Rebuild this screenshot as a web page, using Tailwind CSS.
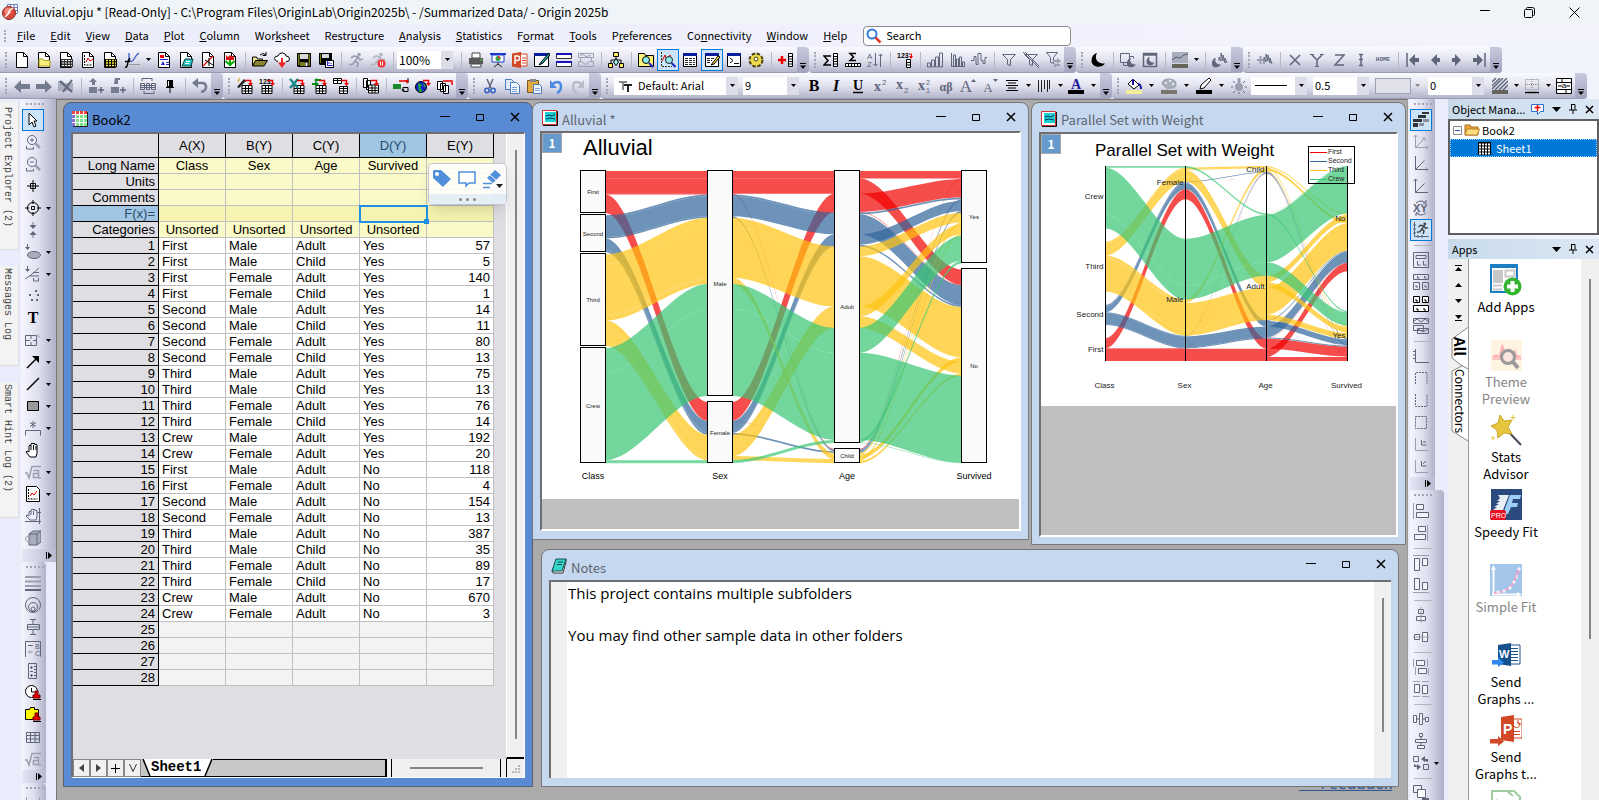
<!DOCTYPE html>
<html lang="en">
<head>
  <meta charset="UTF-8" />
  <meta name="viewport" content="width=device-width, initial-scale=1" />
  <title>Alluvial.opju - Origin 2025b</title>
  <script src="https://cdn.jsdelivr.net/npm/@tailwindcss/browser@4"></script>
</head>
<body class="h-screen overflow-hidden flex flex-col bg-[#f0f3fc] text-black text-[11px] font-['Noto_Sans_CJK_SC','Noto_Sans',sans-serif]">

  <!-- Title bar -->
  <header class="h-6 shrink-0 flex items-center bg-[#eff4f9] pl-[2px]">
    <svg class="w-4 h-4 shrink-0" viewBox="0 0 16 16"><path d="M5.500 .5h10v9h-10zM8.500.5v9M12 .5v9M5.500 3.500h10M5.500 6.500h10" fill="#fff" stroke="#6c7fc0"/><circle cx="7" cy="9" r="6.500" fill="#d94a3c" stroke="#8d2a20"/><circle cx="6" cy="7" r="3.500" fill="#f08a7c"/><path d="M3 13l3-3 2-4 3-2" fill="none" stroke="#fff" stroke-width="1.500"/></svg>
    <h1 class="ml-[6px] text-[12px] whitespace-nowrap">Alluvial.opju * [Read-Only] - C:\Program Files\OriginLab\Origin2025b\ - /Summarized Data/ - Origin 2025b</h1>
    <div class="ml-auto flex pr-[2px]">
      <button aria-label="Minimize" class="w-[45px] h-6 flex items-center justify-center"><svg class="w-[10px] h-[10px]" viewBox="0 0 10 10"><path d="M0 3.500h10" stroke="#000"/></svg></button>
      <button aria-label="Restore" class="w-[45px] h-6 flex items-center justify-center"><svg class="w-[11px] h-[11px]" viewBox="0 0 11 11" fill="none" stroke="#000"><rect x=".5" y="2.500" width="8" height="8" rx="1"/><path d="M2.500 2v-.5a1 1 0 0 1 1-1h5a2 2 0 0 1 2 2v5a1 1 0 0 1-1 1h-.5"/></svg></button>
      <button aria-label="Close" class="w-[45px] h-6 flex items-center justify-center"><svg class="w-[11px] h-[11px]" viewBox="0 0 11 11"><path d="M.5.5l10 10M10.500.5l-10 10" stroke="#000"/></svg></button>
    </div>
  </header>

  <!-- Menu -->
  <nav class="h-[23px] shrink-0 flex items-center bg-linear-to-r from-[#ecedfb] to-[#f3f4fd] pl-1">
    <span class="h-3 w-[2px] border-l-2 border-dotted border-[#a8a8b8] mr-[11px]"></span>
    <div id="menu" class="flex gap-[15px] whitespace-nowrap">
      <a href="#"><u>F</u>ile</a>
      <a href="#"><u>E</u>dit</a>
      <a href="#"><u>V</u>iew</a>
      <a href="#"><u>D</u>ata</a>
      <a href="#"><u>P</u>lot</a>
      <a href="#"><u>C</u>olumn</a>
      <a href="#">Wor<u>k</u>sheet</a>
      <a href="#">Restr<u>u</u>cture</a>
      <a href="#"><u>A</u>nalysis</a>
      <a href="#"><u>S</u>tatistics</a>
      <a href="#">F<u>o</u>rmat</a>
      <a href="#"><u>T</u>ools</a>
      <a href="#">P<u>r</u>eferences</a>
      <a href="#">Co<u>n</u>nectivity</a>
      <a href="#"><u>W</u>indow</a>
      <a href="#"><u>H</u>elp</a>
    </div>
    <label class="ml-4 w-[208px] h-5 flex items-center rounded border border-[#8c8c8c] bg-white pl-[2px]">
      <svg class="w-4 h-4 shrink-0" viewBox="0 0 16 16" fill="none"><circle cx="6" cy="6" r="4.500" stroke="#2f7fe0" stroke-width="2"/><path d="M9.500 9.500l5 5" stroke="#e03c31" stroke-width="2.500"/></svg>
      <input type="text" aria-label="Search" placeholder="Search" class="ml-1 w-full outline-none bg-transparent placeholder:text-black">
    </label>
  </nav>

  <!-- Toolbar row 1 -->
  <div class="h-[26px] shrink-0 flex">
    <div class="flex items-center h-[26px] bg-linear-to-b from-[#fafbff] via-[#e2e3ef] to-[#b4b4cb] border-b border-[#9a9ab2] rounded-r-sm">
      <span data-tools="grip new folder sheet graph matrix func&gt; report notes layout image | open cloud save savet | run runx |" class="contents"></span>
      <label class="flex w-14 h-[18px] bg-white mr-1 text-[12px]"><select aria-label="Zoom" class="appearance-none flex-1 min-w-0 pl-[2px] outline-none"><option>100%</option></select><span class="w-3 bg-[#dcdde9] flex items-center justify-center"><svg class="w-[5px] h-[3px]" viewBox="0 0 5 3"><path d="M0 0h5L2.500 3z"/></svg></span></label>
      <span data-tools="| print slides ppt edit rows rowsg | tree | find zoomg* list noted* cmd gear | addcol cap" class="contents"></span>
    </div>
    <div class="flex items-center h-[26px] bg-linear-to-b from-[#fafbff] via-[#e2e3ef] to-[#b4b4cb] border-b border-[#9a9ab2] rounded-sm">
      <span data-tools="grip sumcol sumrow sort | num | bar1 bar2 bar3 | filt filtx filty cap" class="contents"></span>
    </div>
    <div class="flex items-center h-[26px] bg-linear-to-b from-[#fafbff] via-[#e2e3ef] to-[#b4b4cb] border-b border-[#9a9ab2] rounded-sm">
      <span data-tools="grip moon | moonw moonc | mask&gt; | moonm cap" class="contents"></span>
    </div>
    <div class="flex items-center h-[26px] bg-linear-to-b from-[#fafbff] via-[#e2e3ef] to-[#b4b4cb] border-b border-[#9a9ab2] rounded-sm">
      <span data-tools="grip plusm | axx axy axz axi home | first prev next last cap" class="contents"></span>
    </div>
  </div>

  <!-- Toolbar row 2 -->
  <div class="h-[26px] shrink-0 flex">
    <div class="flex items-center h-[26px] bg-linear-to-b from-[#fafbff] via-[#e2e3ef] to-[#b4b4cb] border-b border-[#9a9ab2] rounded-r-sm">
      <span data-tools="grip back fwd upx | addu addd | swap pin | undog cap" class="contents"></span>
    </div>
    <div class="flex items-center h-[26px] bg-linear-to-b from-[#fafbff] via-[#e2e3ef] to-[#b4b4cb] border-b border-[#9a9ab2] rounded-sm">
      <span data-tools="grip impwiz imp123 | impxl impref impdup | impmulti | conn globe disc cap" class="contents"></span>
    </div>
    <div class="flex items-center h-[26px] bg-linear-to-b from-[#fafbff] via-[#e2e3ef] to-[#b4b4cb] border-b border-[#9a9ab2] rounded-sm">
      <span data-tools="grip cut copy paste undo redo cap" class="contents"></span>
    </div>
    <div class="flex items-center h-[26px] bg-linear-to-b from-[#fafbff] via-[#e2e3ef] to-[#b4b4cb] border-b border-[#9a9ab2] rounded-sm">
      <span data-tools="grip" class="contents"></span>
      <label class="flex w-[124px] h-[18px] bg-white mr-[5px] ml-[2px] items-center"><svg class="w-4 h-4 mx-1 shrink-0" viewBox="0 0 16 16"><path d="M1 3h8v2H6v7H4V5H1z" fill="#888"/><path d="M6 6h8v2h-3v6H9V8H6z" fill="#222"/></svg><select aria-label="Font" class="appearance-none flex-1 min-w-0 outline-none"><option>Default: Arial</option></select><span class="w-3 h-full bg-[#dcdde9] flex items-center justify-center"><svg class="w-[5px] h-[3px]" viewBox="0 0 5 3"><path d="M0 0h5L2.500 3z"/></svg></span></label>
      <label class="flex w-14 h-[18px] bg-white mr-1"><select aria-label="Font size" class="appearance-none flex-1 min-w-0 pl-[2px] outline-none"><option>9</option></select><span class="w-3 bg-[#dcdde9] flex items-center justify-center"><svg class="w-[5px] h-[3px]" viewBox="0 0 5 3"><path d="M0 0h5L2.500 3z"/></svg></span></label>
      <span data-tools="bold italic under sup sub supsub greek abig asmall align&gt; barcode&gt; fontc&gt;&gt; cap" class="contents"></span>
    </div>
    <div class="flex items-center h-[26px] bg-linear-to-b from-[#fafbff] via-[#e2e3ef] to-[#b4b4cb] border-b border-[#9a9ab2] rounded-sm">
      <span data-tools="grip fill&gt;&gt; palette&gt;&gt; pen&gt;&gt; lamp" class="contents"></span>
      <label class="flex w-14 h-[18px] bg-white mr-[3px] ml-px items-center"><span class="w-8 ml-1 border-t border-black"></span><select aria-label="Line style" class="appearance-none flex-1 min-w-0 outline-none"><option></option></select><span class="w-3 h-full bg-[#dcdde9] flex items-center justify-center"><svg class="w-[5px] h-[3px]" viewBox="0 0 5 3"><path d="M0 0h5L2.500 3z"/></svg></span></label>
      <label class="flex w-14 h-[18px] bg-white mx-[3px]"><select aria-label="Line width" class="appearance-none flex-1 min-w-0 pl-[2px] outline-none"><option>0.5</option></select><span class="w-3 bg-[#dcdde9] flex items-center justify-center"><svg class="w-[5px] h-[3px]" viewBox="0 0 5 3"><path d="M0 0h5L2.500 3z"/></svg></span></label>
      <label class="flex w-[50px] h-4 ml-[3px] mr-[3px] items-center"><select aria-label="Pattern" class="appearance-none w-9 h-4 border border-[#a0a0ac] bg-[#dfe0ea]"><option></option></select><svg class="w-[5px] h-[3px] ml-1" viewBox="0 0 5 3"><path d="M0 0h5L2.500 3z" fill="#888"/></svg></label>
      <label class="flex w-14 h-[18px] bg-white mr-[5px]"><select aria-label="Transparency" class="appearance-none flex-1 min-w-0 pl-[2px] outline-none"><option>0</option></select><span class="w-3 bg-[#dcdde9] flex items-center justify-center"><svg class="w-[5px] h-[3px]" viewBox="0 0 5 3"><path d="M0 0h5L2.500 3z"/></svg></span></label>
      <span data-tools="hatch&gt; border&gt; merge cap" class="contents"></span>
    </div>
  </div>

  <div class="flex-1 min-h-0 flex">
    <!-- Docked tabs -->
    <div class="w-[19px] shrink-0 bg-[#ebecfb] flex flex-col gap-4 pt-[3px] font-['Liberation_Mono',monospace] text-[10px] text-[#444]">
      <button class="h-[148px] bg-[#f3f3f3] border-r border-b border-[#ddd] [writing-mode:vertical-rl] text-left pt-[5px] pr-1 leading-[14px]">Project Explorer (2)</button>
      <button class="h-[100px] bg-[#f3f3f3] border-r border-b border-[#ddd] [writing-mode:vertical-rl] text-left pt-[2px] pr-1 leading-[14px]">Messages Log</button>
      <button class="h-[136px] bg-[#f3f3f3] border-r border-b border-[#ddd] [writing-mode:vertical-rl] text-left pt-[2px] pr-1 leading-[14px]">Smart Hint Log (2)</button>
    </div>

    <!-- Left toolbars -->
    <div class="w-[38px] shrink-0 bg-[#ebecfb] pl-[2px] flex flex-col items-start overflow-hidden border-r border-[#777]">
      <div class="w-[35px] shrink-0 pl-px rounded-b-sm bg-linear-to-r from-[#f5f6fe] via-[#dfe0ee] to-[#b0b0c8]">
        <div data-tools="grip pointer* zoomin zoomout cross target&gt; pair region&gt; fit&gt; dots text block&gt; arrow&gt; line&gt; rect&gt; brack&gt; hand sqrt&gt; minig&gt; handg cube cap" data-dir="v"></div>
      </div>
      <div class="w-[25px] shrink-0 pl-px rounded-sm bg-linear-to-r from-[#f5f6fe] via-[#dfe0ee] to-[#b0b0c8]">
        <div data-tools="grip lines rings box legend ruler clock yfold tableg sqrt cap" data-dir="v"></div>
      </div>
      <div class="w-[25px] shrink-0 pl-px rounded-sm bg-linear-to-r from-[#f5f6fe] via-[#dfe0ee] to-[#b0b0c8]">
        <div data-tools="grip frame1" data-dir="v"></div>
      </div>
    </div>

    <!-- Workspace -->
    <main class="flex-1 min-w-0 relative overflow-hidden bg-[#ababab] border-t border-[#777]">
      <a href="#" class="absolute left-[1242px] top-[672px] text-[16px] leading-5 text-[#2f5597] underline">&gt; &gt;Feedback</a>

      <!-- Book2 -->
      <section class="absolute left-[6px] top-[2px] w-[470px] h-[685px] flex flex-col rounded-t-lg border border-[#5a5f6b] bg-[#588bd4] px-[7px] pb-2">
        <div class="h-[29px] shrink-0 flex items-center">
          <svg class="w-4 h-4 ml-px mt-[2px]" viewBox="0 0 16 16" shape-rendering="crispEdges"><path d="M0 0h15v15H0z" fill="#fff"/><path d="M0 0h15v3H0z" fill="#e8453c"/><path d="M0 3h3v12H0z" fill="#8a6fd0"/><path d="M3 3h12v12H3z" fill="#7fe08a"/><path d="M3.500 0v15M7.500 0v15M11.500 0v15M0 3.500h15M0 7.500h15M0 11.500h15" stroke="#fff"/><path d="M15.500 1v14.500H1" stroke="#222" fill="none"/></svg>
          <h2 class="ml-1 text-[13px] leading-4 pt-[5px]">Book2</h2>
          <div data-controls class="ml-auto -mr-[7px] flex self-start pt-1"></div>
        </div>
        <div class="flex-1 min-h-0 flex flex-col bg-[#dfdee3] border-t-2 border-l-2 border-t-[#6f6f6f] border-l-[#6f6f6f] border-r border-b border-r-white border-b-white">
          <div class="flex-1 min-h-0 flex">
            <div class="flex-1 min-w-0 relative font-['Liberation_Sans',Arial,sans-serif] text-[13px]">
              <table class="table-fixed w-[421px] border-separate border-spacing-0 leading-[15px]">
                <thead id="bookHead"></thead>
                <tbody id="bookBody"></tbody>
              </table>
              <!-- Mini toolbar -->
              <div class="absolute left-[355px] top-[29px] w-[79px] h-[42px] rounded border border-[#c4c8cc] bg-white/85 shadow-lg flex flex-col z-10">
                <div class="flex-1 flex items-center justify-around">
                  <button aria-label="Label"><svg class="w-5 h-5" viewBox="0 0 20 20"><path d="M1 2l1-1h7l10 9-8 8-10-9z" fill="#4f8fdc"/><circle cx="5" cy="5" r="2" fill="#fff"/></svg></button>
                  <button aria-label="Comment"><svg class="w-5 h-5" viewBox="0 0 20 20"><path d="M2 3h16v11h-6l-3 3v-3H2z" fill="#fff" stroke="#4f8fdc" stroke-width="1.500"/></svg></button>
                  <button aria-label="Highlight"><svg class="w-5 h-5" viewBox="0 0 20 20"><path d="M12 1l6 5-8 8-6-5z" fill="#4f8fdc"/><path d="M7 6l6 5" stroke="#fff"/><path d="M0 14.500h9M0 18.500h7" stroke="#4f8fdc" stroke-width="1.500"/><path d="M13 15h7l-3.500 4z" fill="#222"/></svg></button>
                </div>
                <div class="h-[10px] bg-[#dfe8f4]/80 flex items-center justify-center gap-1"><i class="w-[3px] h-[3px] rounded-full bg-[#888]"></i><i class="w-[3px] h-[3px] rounded-full bg-[#888]"></i><i class="w-[3px] h-[3px] rounded-full bg-[#888]"></i></div>
              </div>
            </div>
            <div class="w-[18px] bg-[#f0f0f0] border-l border-white border-b-2 border-b-black flex justify-center pt-4 pb-[18px]"><span class="w-[2px] bg-[#858585]"></span></div>
          </div>
          <div class="h-[18px] flex bg-[#f0f0f0]">
            <button aria-label="Previous sheet" class="w-[17px] border border-[#888] flex items-center justify-center"><svg class="w-[5px] h-2" viewBox="0 0 5 8"><path d="M5 0v8L0 4z" fill="#444"/></svg></button>
            <button aria-label="Next sheet" class="w-[17px] border border-[#888] flex items-center justify-center"><svg class="w-[5px] h-2" viewBox="0 0 5 8"><path d="M0 0v8l5-4z" fill="#444"/></svg></button>
            <button aria-label="Add sheet" class="w-[17px] border border-[#888] flex items-center justify-center"><svg class="w-[9px] h-[9px]" viewBox="0 0 9 9"><path d="M4.500 0v9M0 4.500h9" stroke="#000"/></svg></button>
            <button aria-label="Sheet list" class="w-[17px] border border-[#888] flex items-center justify-center"><svg class="w-[8px] h-[8px]" viewBox="0 0 8 8"><path d="M.5 0L4 7.500 7.500 0" fill="none" stroke="#333"/></svg></button>
            <div class="w-[246px] flex bg-[#c8c8c8] border-r-2 border-b border-black">
              <svg class="w-[10px] h-[17px]" viewBox="0 0 10 17"><path d="M3 0l6 17h1V0z" fill="#fff"/><path d="M2 0l7 17" stroke="#000" stroke-width="1.500"/></svg>
              <button class="bg-white font-['Liberation_Mono',monospace] font-bold text-[14px] leading-[17px]">Sheet1</button>
              <svg class="w-[12px] h-[17px]" viewBox="0 0 12 17"><path d="M0 0h11L4 17H0z" fill="#fff"/><path d="M11 0L4 17" stroke="#000" stroke-width="1.500"/></svg>
              <span class="flex-1 border-t border-black"></span>
            </div>
            <div class="ml-1 flex-1 border-x border-black flex items-center justify-center"><span class="w-[73px] h-[2px] bg-[#858585]"></span></div>
            <div class="ml-[5px] w-[18px] border-l border-black flex items-end justify-end p-1"><svg class="w-2 h-2" viewBox="0 0 8 8" fill="#b8b8b8"><path d="M6 0h2v2H6zM3 3h2v2H3zM6 3h2v2H6zM0 6h2v2H0zM3 6h2v2H3zM6 6h2v2H6z"/></svg></div>
          </div>
        </div>
      </section>

      <!-- Alluvial -->
      <section class="absolute left-[475px] top-[2px] w-[497px] h-[438px] flex flex-col rounded-t-lg border border-[#777] bg-[#c6d8f0] px-[7px] pb-2">
        <div class="h-[28px] shrink-0 flex items-center">
          <svg class="w-4 h-4 ml-[2px] mt-[2px]" viewBox="0 0 16 16"><path d="M.5.5h14v14H.5z" fill="#fff" stroke="#c33"/><path d="M3 2h11v10H3z" fill="#1fd0d0"/><path d="M4 6l3-1 3 1 3-2M4 9l4-1 5 1" stroke="#036" fill="none"/><path d="M15.500 1v14.500H1" stroke="#111" fill="none"/></svg>
          <h2 class="ml-1 text-[13px] leading-4 pt-[5px] text-[#5c6470]">Alluvial *</h2>
          <div data-controls class="ml-auto -mr-[7px] flex self-start pt-1"></div>
        </div>
        <div class="flex-1 min-h-0 relative bg-[#bfbfbf] border-t-2 border-l-2 border-t-[#6f6f6f] border-l-[#6f6f6f] border-r-2 border-b-2 border-r-white border-b-white">
          <button class="absolute left-0 top-0 w-5 h-5 bg-[#6699cc] border border-[#aaa] text-white font-bold text-[12px] leading-4">1</button>
          <svg id="alluvial" class="w-full h-[366px] bg-white font-['Liberation_Sans',Arial,sans-serif]" viewBox="0 0 477 366" preserveAspectRatio="xMinYMin meet"></svg>
        </div>
      </section>

      <!-- Parallel Set with Weight -->
      <section class="absolute left-[974px] top-[2px] w-[375px] h-[443px] flex flex-col rounded-t-lg border border-[#777] bg-[#c6d8f0] px-[7px] pb-[7px]">
        <div class="h-[29px] shrink-0 flex items-center">
          <svg class="w-4 h-4 ml-[2px] mt-[2px]" viewBox="0 0 16 16"><path d="M.5.5h14v14H.5z" fill="#fff" stroke="#c33"/><path d="M3 2h11v10H3z" fill="#1fd0d0"/><path d="M4 6l3-1 3 1 3-2M4 9l4-1 5 1" stroke="#036" fill="none"/><path d="M15.500 1v14.500H1" stroke="#111" fill="none"/></svg>
          <h2 class="ml-1 text-[13px] leading-4 pt-[5px] text-[#5c6470]">Parallel Set with Weight</h2>
          <div data-controls class="ml-auto -mr-[7px] flex self-start pt-1"></div>
        </div>
        <div class="flex-1 min-h-0 relative bg-[#bfbfbf] border-t-2 border-l-2 border-t-[#6f6f6f] border-l-[#6f6f6f] border-r-2 border-b-2 border-r-white border-b-white">
          <button class="absolute left-0 top-0 w-5 h-5 bg-[#6699cc] border border-[#aaa] text-white font-bold text-[12px] leading-4">1</button>
          <svg id="parallel" class="w-full h-[272px] bg-white font-['Liberation_Sans',Arial,sans-serif]" viewBox="0 0 355 272" preserveAspectRatio="xMinYMin meet"></svg>
        </div>
      </section>

      <!-- Notes -->
      <section class="absolute left-[484px] top-[449px] w-[858px] h-[238px] flex flex-col rounded-t-lg border border-[#777] bg-[#c6d8f0] px-[7px] pb-2">
        <div class="h-[30px] shrink-0 flex items-center">
          <svg class="w-4 h-4 ml-[2px] mt-[2px]" viewBox="0 0 16 16"><path d="M15 1v3l-3 11H2l-1-2 1-3z" fill="#fff" stroke="#333"/><path d="M5 1h10l-4 12H1z" fill="#35d6cc" stroke="#12504c"/><path d="M7 4h5M6 6.500h5" stroke="#12504c"/></svg>
          <h2 class="ml-1 text-[13px] leading-4 pt-[5px] text-[#5c6470]">Notes</h2>
          <div data-controls class="ml-auto -mr-[7px] flex self-start pt-1"></div>
        </div>
        <div class="flex-1 min-h-0 flex bg-white border-t-2 border-l-2 border-t-[#6f6f6f] border-l-[#6f6f6f]">
          <span class="w-4 bg-[#f0f0f0]"></span>
          <textarea aria-label="Notes" class="flex-1 resize-none outline-none overflow-hidden pl-px pt-px text-[15px] leading-[21px] font-['Open_Sans','Noto_Sans',sans-serif]">This project contains multiple subfolders

You may find other sample data in other folders</textarea>
          <div class="w-[17px] bg-[#f0f0f0] flex justify-center pt-4 pb-[46px]"><span class="w-[2px] bg-[#858585]"></span></div>
        </div>
      </section>
    </main>

    <!-- Right toolbars -->
    <div class="w-[41px] shrink-0 bg-[#ebecfb] pl-[2px] flex flex-col items-start overflow-hidden border-l border-[#999]">
      <div class="w-[25px] shrink-0 rounded-b-sm bg-linear-to-r from-[#f5f6fe] via-[#dfe0ee] to-[#b0b0c8]">
        <div data-tools="grip stairs* ax1 ax2 ax3 xy runax* | lay1 lay2 lay3 lay4 | fr1 fr2 fr3 fr4 fr5 fr6 cap" data-dir="v"></div>
      </div>
      <div class="w-[34px] shrink-0 rounded-t-sm bg-linear-to-r from-[#f5f6fe] via-[#dfe0ee] to-[#b0b0c8]">
        <div data-tools="grip al1 al2 | al3 al4 | al5 al6 | al7 al8 | al9 al10 rot&gt; | front" data-dir="v"></div>
      </div>
    </div>

    <!-- Docked panels -->
    <aside class="w-[151px] shrink-0 flex flex-col bg-[#f0f3fc]">
      <div class="h-5 shrink-0 flex items-center pl-1 bg-linear-to-r from-[#c8daea] to-[#dbe8f4]">
        <h2 class="whitespace-nowrap">Object Mana...</h2>
        <div class="ml-auto flex items-center gap-[8px] pr-[5px]">
          <button aria-label="Add"><svg class="w-[13px] h-[13px]" viewBox="0 0 13 13"><path d="M.5 1.500h12v7h-3l-3 3v-3h-6z" fill="#fff" stroke="#2f6fd6"/><path d="M6.500 2v6M3.500 4.500h6" stroke="#f00" stroke-width="1.500"/></svg></button>
          <button aria-label="Menu"><svg class="w-[9px] h-[5px]" viewBox="0 0 9 5"><path d="M0 0h9L4.500 5z"/></svg></button>
          <button aria-label="Pin"><svg class="w-2 h-[10px]" viewBox="0 0 8 10"><path d="M2 .5h4v5M2.500 0v6M0 6h8M4 6v4" stroke="#000" fill="none"/></svg></button>
          <button aria-label="Close"><svg class="w-[9px] h-[9px]" viewBox="0 0 9 9"><path d="M1 1l7 7M8 1L1 8" stroke="#000" stroke-width="1.500"/></svg></button>
        </div>
      </div>
      <ul class="h-[116px] shrink-0 border-2 border-[#5f5f63] bg-white leading-[18px]">
        <li class="h-[18px] flex items-center pl-[3px] gap-[2px]"><svg class="w-[9px] h-[9px]" viewBox="0 0 9 9"><path d="M.5.5h8v8h-8z" fill="#fff" stroke="#888"/><path d="M2 4.500h5" stroke="#2a4fae"/></svg><svg class="w-4 h-4" viewBox="0 0 16 16"><path d="M1 3h5l1 2h7v8H1z" fill="#e8a93a" stroke="#a8701c"/><path d="M3 7h12.500l-2.500 6H1z" fill="#ffdc7e" stroke="#b8802a"/></svg>Book2</li>
        <li class="h-[18px] flex items-center pl-[28px] gap-[5px] bg-[#0078d7] text-white outline-1 -outline-offset-1 outline-dotted outline-[#9cd0ff]"><svg class="w-[13px] h-[13px]" viewBox="0 0 13 13"><path d="M0 0h13v13H0z"/><path d="M1 2.500h11M1 5.500h11M1 8.500h11M1 11.500h11" stroke="#fff" stroke-width="2"/><path d="M3.500 1v12M6.500 1v12M9.500 1v12" stroke="#000"/></svg>Sheet1</li>
      </ul>
      <div class="h-5 shrink-0 mt-1 flex items-center pl-1 bg-linear-to-r from-[#c8daea] to-[#dbe8f4]">
        <h2>Apps</h2>
        <div class="ml-auto flex items-center gap-[8px] pr-[5px]">
          <button aria-label="Menu"><svg class="w-[9px] h-[5px]" viewBox="0 0 9 5"><path d="M0 0h9L4.500 5z"/></svg></button>
          <button aria-label="Pin"><svg class="w-2 h-[10px]" viewBox="0 0 8 10"><path d="M2 .5h4v5M2.500 0v6M0 6h8M4 6v4" stroke="#000" fill="none"/></svg></button>
          <button aria-label="Close"><svg class="w-[9px] h-[9px]" viewBox="0 0 9 9"><path d="M1 1l7 7M8 1L1 8" stroke="#000" stroke-width="1.500"/></svg></button>
        </div>
      </div>
      <div class="flex-1 min-h-0 flex bg-[#f0f0f0]">
        <div class="w-5 shrink-0 flex flex-col items-center">
          <div class="h-[68px] flex flex-col items-center justify-between pt-[6px] pb-[6px]">
            <svg class="w-[7px] h-[7px]" viewBox="0 0 7 7"><path d="M0 .5h7" stroke="#000"/><path d="M0 6h7L3.500 2z"/></svg>
            <svg class="w-[7px] h-1" viewBox="0 0 7 4"><path d="M0 4h7L3.500 0z"/></svg>
            <svg class="w-[7px] h-1" viewBox="0 0 7 4"><path d="M0 0h7L3.500 4z"/></svg>
            <svg class="w-[7px] h-[7px]" viewBox="0 0 7 7"><path d="M0 6.500h7" stroke="#000"/><path d="M0 1h7L3.500 5z"/></svg>
          </div>
          <div class="relative w-5 h-[120px]">
            <svg class="absolute inset-0 w-5 h-[120px]" viewBox="0 0 20 120"><path d="M20.500 0L4 12v19l10 8-10 5v60l16 10" fill="#fff" stroke="#888"/><path d="M13 38l7 4" stroke="#888"/></svg>
            <button class="absolute left-1 top-[10px] font-bold text-[15px] leading-4 [writing-mode:vertical-rl]">All</button>
            <button class="absolute left-1 top-[42px] text-[12px] leading-4 [writing-mode:vertical-rl]">Connectors</button>
          </div>
        </div>
        <div class="flex-1 border-l border-[#999] bg-white pt-[5px] overflow-hidden text-[13px] leading-[17px] text-center">
          <button class="w-[74px] h-[75px] flex flex-col items-center gap-[2px]"><svg class="w-8 h-8 shrink-0" viewBox="0 0 32 32"><path d="M1 1h26v27H1z" fill="#fff" stroke="#1a7fc1" stroke-width="2"/><path d="M0 0h28v4H0z" fill="#1a7fc1"/><path d="M3 6h10v13H3z" fill="#c8c8c8"/><path d="M15.500 6.500h9v6h-9zM3 21.500h9M3 25.500h9" fill="none" stroke="#c8c8c8" stroke-width="2"/><circle cx="22.500" cy="22.500" r="9" fill="#35b42f"/><path d="M22.500 17v11M17 22.500h11" stroke="#fff" stroke-width="4"/></svg><span>Add Apps</span></button>
          <button class="w-[74px] h-[75px] flex flex-col items-center gap-[2px] text-[#858585]"><svg class="w-8 h-8 shrink-0" viewBox="0 0 32 32"><path d="M1 1h31v31H1z" fill="#fff3e2"/><path d="M2 18l4-3 3 2 3-13 4 10 3-5 3 5 3-4 2 6 4 1v1H2z" fill="#ffb0b5"/><path d="M2 19.500h29" stroke="#ffc4c8" stroke-width="3"/><circle cx="18" cy="18" r="6.500" fill="#fbe6dd" stroke="#999" stroke-width="3"/><path d="M23 23l5 6" stroke="#999" stroke-width="4"/></svg><span>Theme<br>Preview</span></button>
          <button class="w-[74px] h-[75px] flex flex-col items-center gap-[2px]"><svg class="w-8 h-8 shrink-0" viewBox="0 0 32 32"><path d="M14 13l17 18" stroke="#444c58" stroke-width="2"/><path d="M10 1l4 6 8-1-4 7 4 7-8-1-6 5-1-8-6-4 7-3z" fill="#e6c53f" stroke="#cda728"/><path d="M23 1v5M20.500 3.500h5M3 22v4M1 24h4" stroke="#e6c53f"/></svg><span>Stats<br>Advisor</span></button>
          <button class="w-[74px] h-[75px] flex flex-col items-center gap-[2px]"><svg class="w-8 h-8 shrink-0" viewBox="0 0 32 32"><path d="M1 0h31v31H1z" fill="#2b4a7d"/><path d="M20 6h11l-1 4h-7l-1 4h6l-1 4h-6l-3 7h-5z" fill="#9fd0f5"/><path d="M8 6h11l-6 15H3l4-3H4l5-3H6l4-3H7l3-3z" fill="#e8eef6"/><rect x="0" y="21" width="16" height="10" rx="2" fill="#e81123"/><text x="1" y="29" font-size="7" fill="#fff" font-family="Liberation Sans">PRO</text></svg><span>Speedy Fit</span></button>
          <button class="w-[74px] h-[75px] flex flex-col items-center gap-[2px] text-[#858585]"><svg class="w-8 h-8 shrink-0" viewBox="0 0 32 32"><path d="M0 0h32v32H0z" fill="#a3c5ea"/><path d="M3.500 31V3M2 30.500h28" stroke="#fff" stroke-width="2"/><path d="M1 6l2.500-5L6 6zM27 28l5 2.500-5 2z" fill="#fff"/><path d="M4 29c13-1 20-5 25-25" fill="none" stroke="#f3a0c8" stroke-width="2"/><path d="M8 26v4M6 28h4M14 25v4M12 27h4M20 22v4M18 24h4M24 16v4M22 18h4M27 11v4M29 3v4M27 5h4" stroke="#fff"/></svg><span>Simple Fit</span></button>
          <button class="w-[74px] h-[75px] flex flex-col items-center gap-[2px]"><svg class="w-8 h-8 shrink-0" viewBox="0 0 32 32"><path d="M19 6h11v19H19z" fill="#fff" stroke="#1a5490"/><path d="M21 9.500h7M21 12.500h7M21 15.500h7M21 18.500h7M21 21.500h7" stroke="#1a5490"/><path d="M8 6l13-2v23L8 25z" fill="#14508c"/><text x="9" y="19" font-size="11" font-weight="bold" fill="#fff" font-family="Liberation Sans">W</text><path d="M2 21h6v-3l6 5.500L8 28v-2.500H2z" fill="#2d89ef"/></svg><span>Send<br>Graphs&nbsp;...</span></button>
          <button class="w-[74px] h-[75px] flex flex-col items-center gap-[2px]"><svg class="w-8 h-8 shrink-0" viewBox="0 0 32 32"><path d="M21 5h11v19H21z" fill="#fff" stroke="#d24726"/><path d="M24 12a3 3 0 1 0 4-4M23 17.500h7M23 20.500h7M28 6v4h3" stroke="#d24726" fill="none"/><path d="M11 3l13-2v27l-13-2z" fill="#d24726"/><text x="13" y="20" font-size="14" font-weight="bold" fill="#fff" font-family="Liberation Sans">P</text><path d="M0 25h8v-3l6 5.500L8 32v-2.500H0z" fill="#d24726"/></svg><span>Send<br>Graphs&nbsp;t...</span></button>
          <button aria-label="App" class="w-[74px] h-[75px] flex flex-col items-center"><svg class="w-8 h-8 shrink-0" viewBox="0 0 32 32"><path d="M2 32V2h15l6 5M18 2h6l6 6v24M6 11l11 8" fill="none" stroke="#9fcc9f" stroke-width="2"/></svg></button>
        </div>
        <div class="w-[18px] shrink-0 flex justify-center pt-5"><span class="w-[2px] h-[360px] bg-[#858585]"></span></div>
      </div>
    </aside>
  </div>

  <script>
    const G = '#5f667a';
    const L = '#9aa0b0';
    const page = '<path d="M2.500.5h7l4 4v11h-11z" fill="#fff" stroke="#000"/><path d="M9.500.5v4h4" fill="none" stroke="#000"/>';
    const grid = (x, y) => `<path d="M${x} ${y}h10v8h-10zM${x} ${y + 3}h10M${x} ${y + 5.5}h10M${x + 3.5} ${y}v8M${x + 6.5} ${y}v8" fill="#fff" stroke="#000"/>`;
    const redArrow = '<path d="M8 2.500h5.500v3" fill="none" stroke="#e00" stroke-width="1.500"/><path d="M11 5h5l-2.500 3z" fill="#e00"/>';
    const txt = (s, size, color, extra = '') => `<text x="8" y="13" text-anchor="middle" font-size="${size}" fill="${color}" ${extra}>${s}</text>`;
    const serif = 'font-family="Liberation Serif" font-weight="bold"';
    const gline = (d, c = G) => `<path d="${d}" fill="none" stroke="${c}"/>`;
    const runner = (c) => `<circle cx="11" cy="2.500" r="1.800" fill="${c}"/><path d="M3 6l3-2 4 1-3 4 3 2-1 4M7 9l-2 3-4 1M10 5l2 3 3-1" fill="none" stroke="${c}" stroke-width="1.800"/>`;
    const paper = (x, y, w, h) => `<path d="M${x} ${y}h${w}v${h}h-${w}z" fill="#f4f5fb" stroke="${G}"/>`;

    const icons = {
      new: page,
      folder: page + '<path d="M3 7h4l1 1.500h6V14H3z" fill="#f5ee7c" stroke="#a59a20"/>',
      sheet: page + '<path d="M3 7h12v8H3z" fill="#333"/><path d="M4 8.500h10M4 11h10M4 13.500h10" stroke="#fff" stroke-dasharray="2 1"/>',
      graph: page + '<path d="M4.500 3v10h8" fill="none" stroke="#000" stroke-dasharray="2 1"/><path d="M6 10l2-4 2 3 3-2" fill="none" stroke="#e00"/>',
      matrix: page + '<path d="M3 7h12v8H3z" fill="#000"/><path d="M4 8.500h10M4 11h10M4 13.500h10" stroke="#ffef3a" stroke-width="1.500" stroke-dasharray="2 1"/>',
      func: '<path d="M5 1v6q2 5 5 0t5-6" fill="none" stroke="#3556c8" stroke-width="1.300"/><path d="M1 15q2 1 2.500-3T6 6M1 9.500h5" fill="none" stroke="#000" stroke-width="1.500"/><path d="M5 12.500h11" stroke="#999"/>',
      report: page + '<path d="M4 3h4v3H4z" fill="#e00"/><path d="M5 13l2-4 2 4z" fill="#22c"/><path d="M4 7.500h8M10 10.500h3M10 12.500h3" stroke="#22c"/>',
      notes: page + '<path d="M7 7h8l-2 7H4z" fill="#27c7c7" stroke="#044"/><path d="M8 9.500h4M7 11.500h4" stroke="#fff"/>',
      layout: page + '<path d="M3 14L13 4" stroke="#e00" stroke-width="1.300"/><path d="M5 8l8 5M9 6v8" stroke="#000"/>',
      image: page + '<path d="M4 3l2 2 2-2 2 2 2-2v5H4z" fill="#e01010"/><path d="M8 8v6" stroke="#0a0" stroke-width="2"/><path d="M3.500 9L8 13l4.500-4" fill="none" stroke="#0a0" stroke-width="2"/>',
      open: '<path d="M.5 14V5h4l1 2h5v2" fill="#f0e890" stroke="#000"/><path d="M.5 14l3-5.500h12L12 14z" fill="#8c8430" stroke="#000"/><path d="M8 3q3-3 6 0M14 0v3.500h-3.500" fill="none" stroke="#000"/>',
      cloud: '<path d="M4 9.500Q.5 9 .5 6.500T4 4q1-3.500 4.500-3T12 4q3.500 0 3.500 3T12 9.500" fill="#fff" stroke="#000"/><path d="M8 6v6" stroke="#e22" stroke-width="2"/><path d="M4 10.500h8L8 16z" fill="#e22"/>',
      save: '<path d="M1 1h14v14H2l-1-1z"/><path d="M2 2h1.500v11H2zM12.500 2H14v12h-1.500z" fill="#7a7a1c"/><path d="M4 2h8v5H4z" fill="#d8d8d8"/><path d="M4 10h5v4H4z" fill="#7a7a1c"/><path d="M9.500 10.500h2V14h-2z" fill="#fff"/>',
      savet: '<path d="M1 1h13v12H2l-1-1z"/><path d="M2 2h1v9H2z" fill="#7a7a1c"/><path d="M4 2h7v4H4z" fill="#d8d8d8"/><path d="M7.500 8.500h8v7h-8z" fill="#fff" stroke="#000"/><path d="M9.500 9v4.500h5M11 12v-2M13 12v-1" stroke="#22c" fill="none"/>',
      run: runner(L),
      runx: runner('#b5b8c2') + '<circle cx="11.500" cy="11.500" r="4" fill="#e33"/><path d="M10.500 9.500v4M12.500 9.500v4" stroke="#fff"/>',
      print: '<path d="M4 1h8v5H4z" fill="#fff" stroke="#444"/><path d="M1 6h14v6H1z" fill="#5a5a5a"/><path d="M3 12h10v3H3z" fill="#fff" stroke="#444"/><path d="M12 8h2" stroke="#4d4"/>',
      slides: '<path d="M0 1h16v2H0z" fill="#1a3cc8"/><path d="M2 3h12v7H2z" fill="#fff" stroke="#1a3cc8"/><circle cx="8" cy="6.500" r="2.500" fill="#2a4"/><path d="M8 6.500V4a2.500 2.500 0 0 1 2.500 2.500z" fill="#e33"/><path d="M8 10v3M4 15l4-3 4 3" stroke="#222" fill="none"/>',
      ppt: '<path d="M8 2h7v12H8z" fill="#fff" stroke="#d24726"/><path d="M10 6h4M10 8.500h4M10 11h4" stroke="#d24726"/><path d="M0 1.500L9 0v16l-9-1.500z" fill="#d24726"/><path d="M3 12V4h2.500q2 0 2 2.200T5.500 8.500H3" fill="none" stroke="#fff" stroke-width="1.500"/>',
      edit: '<path d="M.5 1.500h14v13H.5z" fill="#fff" stroke="#000"/><path d="M0 1h15v3H0z" fill="#0a1e9c"/><path d="M15 1L8 9l-3 4 4-2 7-8z" fill="#2aa" stroke="#000"/>',
      rows: '<path d="M.5 1.500h15v5H.5zM.5 9.500h15v5H.5z" fill="#fff" stroke="#333"/><path d="M0 1h16v2H0zM0 9h16v2H0z" fill="#1414b4"/>',
      rowsg: gline('M.5 1.500h15v4H.5zM2.500 5.500v4M13.500 5.500v4M.5 9.500h3l4 3 4-3h4v5H.5zM2 3.500l3-1 3 2 5-1', L),
      tree: '<path d="M8 5v3M3 11V8h10v3" fill="none" stroke="#000"/><path d="M5.500.5h5v4h-5z" fill="#ffee5a" stroke="#000"/><path d="M.5 11.500h4v4h-4zM11.500 11.500h4v4h-4z" fill="#ffee5a" stroke="#000"/><path d="M8 6.500l2.500 3.500L8 13.500 5.500 10z" fill="#8feaf0" stroke="#000"/>',
      find: '<path d="M.5 1.500h6l1 2h8v11H.5z" fill="#fff27a" stroke="#000"/><circle cx="8" cy="8" r="3.500" fill="#8feaf0" stroke="#000"/><path d="M11 11l4 4" stroke="#22c" stroke-width="2"/>',
      zoomg: '<path d="M1.500 0v14.500H12" fill="none" stroke="#333" stroke-dasharray="2 1"/><path d="M2 9l3-6 2 6 2-5 2-1" fill="none" stroke="#d00"/><circle cx="9" cy="8" r="3.500" fill="#8feaf0" stroke="#222"/><path d="M11.500 11l4 4" stroke="#22c" stroke-width="2"/>',
      list: '<path d="M1.500 1.500h13v13h-13z" fill="#fff" stroke="#000"/><path d="M1 1h14v3H1z" fill="#0a1e9c"/><path d="M3 6.500h10M3 8.500h10M3 10.500h10M3 12.500h10" stroke="#222" stroke-dasharray="3 1"/>',
      noted: '<path d="M1.500 1.500h13v13h-13z" fill="#fff" stroke="#000"/><path d="M1 1h14v3H1z" fill="#0a1e9c"/><path d="M3 6.500h7M3 8.500h5M3 10.500h4" stroke="#222" stroke-dasharray="3 1"/><path d="M14 4l-7 9 3-1 6-7z" fill="#ffe23a" stroke="#000"/>',
      cmd: '<path d="M1.500 1.500h13v13h-13z" fill="#fff" stroke="#000"/><path d="M1 1h14v3H1z" fill="#0a1e9c"/><path d="M4 6l3 2.500L4 11M8 11.500h5" fill="none" stroke="#000"/>',
      gear: '<circle cx="8" cy="8" r="5.500" fill="#d8c02a" stroke="#4a4408" stroke-width="4" stroke-dasharray="3 1.300"/><circle cx="8" cy="8" r="5.500" fill="#f0dc4a"/><circle cx="8" cy="7" r="2" fill="#fff" stroke="#4a4408"/>',
      addcol: '<path d="M0 8h8M4 4v8" stroke="#e00" stroke-width="2.500"/><path d="M10.500 1.500h4v13h-4zM10 4.500h5M10 7h5M10 9.500h5M10 12h5" fill="#fff" stroke="#000"/>',
      sumcol: '<path d="M8 4H1l4 4.500L1 13h7" fill="none" stroke="#000" stroke-width="1.500"/><path d="M10.500 1.500h4v13h-4zM10 4.500h5M10 7h5M10 9.500h5M10 12h5" fill="#fff" stroke="#000"/>',
      sumrow: '<path d="M11 1.500H5L8.500 5 5 8.500h6" fill="none" stroke="#000" stroke-width="1.500"/><path d="M.5 11.500h15v3H.5zM3.500 11v4M6.500 11v4M9.500 11v4M12.500 11v4" fill="#fff" stroke="#000"/>',
      sort: `<text x="0" y="7" font-size="8" fill="${G}">A</text><text x="0" y="15" font-size="8" fill="${G}">Z</text>` + gline('M8.500 1v13M6.500 12l2 2 2-2M13.500 15V2M11.500 4l2-2 2 2'),
      num: '<text x="0" y="6" font-size="7" font-weight="bold">123</text><path d="M12 2h2.500v3" stroke="#e00" fill="none"/><path d="M12 4h4l-2 3z" fill="#e00"/><path d="M9.500 7.500h4v8h-4zM9 10.500h5M9 13h5" fill="#fff" stroke="#000"/>',
      bar1: gline('M.5 15v-4h3v4zM4.500 15V8h3v7zM8.500 15V5h3v10zM12.500 15V1h3v14z'),
      bar2: gline('M2.500 1v13.500H16M4.500 14V3h2v11M7.500 14V7h2v7M10.500 14V5h2v9M13.500 14v-4h2v4'),
      bar3: gline('M0 8.500h3v-4h2v8h2v-11h3v7h2v3h2v-6h2'),
      filt: gline('M1.500 2.500h13l-5 5v6l-3-1v-5z'),
      filtx: gline('M1.500 2.500h13l-5 5v6l-3-1v-5zM0 0l16 16M2 0l14 14'),
      filty: gline('M1.500 .5h11l-4 5v6l-3-1v-5z') + `<path d="M8 8h4v-2l4 3-4 3v-2H8zM15 12h-4v-1l-3 2.500 3 2.500v-2h4z" fill="${L}"/>`,
      moon: '<path d="M7 1C4 6 7 12 15 11.500C11 17 1 15.500 1.500 8C2 4 4 1.500 7 1z"/>',
      moonw: gline('M.5 1.500h9v9h-9zM3.500 10.500v3h4M9.500 4.500h4v2') + `<path d="M11 6C9 9 11 13 16 12.500C13 17 6 16 7 11C7 8 9 6 11 6z" fill="${G}"/>`,
      moonc: `<path d="M1.500 1.500h13v13h-13zM1 3h14" fill="none" stroke="${G}" stroke-width="1.500"/><path d="M8 5C6 8 8 11 12.500 10.500C10 15 4 14 4.500 9C5 6.500 6 5 8 5z" fill="${G}"/>`,
      mask: `<path d="M0 0h16v11H0z" fill="#a9aebc"/><path d="M0 8l4-3 4 1 4-3 4-1" fill="none" stroke="#555c70"/><path d="M0 12h16v4H0z" fill="#666658"/>`,
      moonm: `<path d="M4 6C2 9 4 13 9 12.500C6 17 -1 16 0 11C0 8 2 6 4 6z" fill="${G}"/>` + gline('M7 9V5l2 4V1l2 8V3l2 8V6l2 5'),
      plusm: `<path d="M0 8h7M3.500 4v8" stroke="${L}" stroke-width="2"/>` + gline('M7 12V5l2 5V2l2 7V3l2 8V6l2 6'),
      axx: `<path d="M3 3l10 10M13 3L3 13" stroke="${G}" stroke-width="1.500"/>`,
      axy: `<path d="M3 3l5 5 5-5M8 8v6" fill="none" stroke="${G}" stroke-width="1.500"/>` + gline('M1 2.500h4M11 2.500h4M6 14.500h4'),
      axz: `<path d="M4 3h9L4 13h9" fill="none" stroke="${G}" stroke-width="1.500"/>`,
      axi: `<path d="M6 2.500h4M8 3v10M6 13.500h4M6 7.500h4" fill="none" stroke="${G}" stroke-width="1.500"/>`,
      home: `<text x="8" y="9" text-anchor="middle" font-size="6" font-weight="bold" fill="${G}" font-family="Liberation Mono">HOME</text>`,
      first: `<path d="M2 1v14" stroke="${G}" stroke-width="1.500"/><path d="M4 8l6-6v4h4v4h-4v4z" fill="${G}"/>`,
      prev: `<path d="M4 8l6-6v4h3v4h-3v4z" fill="${G}"/>`,
      next: `<path d="M12 8L6 2v4H3v4h3v4z" fill="${G}"/>`,
      last: `<path d="M14 1v14" stroke="${G}" stroke-width="1.500"/><path d="M12 8L6 2v4H2v4h4v4z" fill="${G}"/>`,

      back: '<path d="M0 9l7-7v4h9v5H7v4z" fill="#757c90"/>',
      fwd: '<path d="M16 9L9 2v4H0v5h9v4z" fill="#757c90"/>',
      upx: `<path d="M0 3h5l1 2h9v8H0z" fill="#a9aebc"/><path d="M2 3l12 11M14 2L5 14" stroke="${G}" stroke-width="2"/>`,
      addu: `<path d="M4 7V4H1l4-4 4 4H7v3zM1 9h8v6H1z" fill="#757c90"/><path d="M13 9v6M10 12h6" stroke="${G}" stroke-width="1.500"/>`,
      addd: `<path d="M5 0h5v2H8v4H4zM1 9h8v6H1z" fill="#757c90"/><path d="M13 9v6M10 12h6" stroke="${G}" stroke-width="1.500"/>`,
      swap: gline('M.5 5.500h4v6h-4zM6.500 5.500h3v6h-3zM11.500 5.500h4v6h-4zM0 7.500h16M0 9.500h16M2 3V.5h10M14 13v2.500H4M12 0v3M4 13v3'),
      pin: '<path d="M5 2h6v7H5z"/><path d="M4 9.500h8M8 9v6" stroke="#000"/><path d="M6.500 3v5" stroke="#fff"/>',
      undog: '<path d="M3 5h7q4 0 4 4t-5 5" fill="none" stroke="#757c90" stroke-width="2.500"/><path d="M6 0v10L0 5z" fill="#757c90"/>',
      impwiz: grid(5, 7.5) + '<path d="M0 9l7-8 2 2-7 7z" fill="#222"/><path d="M2 0v3M0 3h2" stroke="#caa500"/>' + redArrow,
      imp123: '<text x="0" y="6" font-size="7" font-weight="bold">123</text>' + grid(3, 7.5) + redArrow,
      impxl: grid(5, 7.5) + '<path d="M1 1l8 9M9 1L1 10" stroke="#178a8a" stroke-width="2.500"/>' + redArrow,
      impref: grid(5, 7.5) + '<path d="M1 5h3V3l4 3-4 3V7H1zM10 1H6V0L3 2l3 2V3h4z" fill="#0a8a1a"/>' + redArrow,
      impdup: '<path d="M.5.5h8v5h-8zM.5 2.500h8M4.500.5v5M6.500 8.500h8v7h-8zM6.500 10.500h8M6.500 13h8M10.500 8.500v7" fill="#fff" stroke="#000"/>' + redArrow,
      impmulti: '<path d="M.5.5h4v9h-4zM3.500 2.500h4v9h-4z" fill="#fff" stroke="#000"/>' + grid(5.5, 7) + redArrow,
      conn: '<path d="M0 6h8v5H0z" fill="#1c8a2c"/><path d="M8.500 12h3M10 9.500h5v4h-5zM15 0v5" fill="none" stroke="#000"/><path d="M6 3h8" stroke="#e00" stroke-width="1.500"/><path d="M12 2h4l-2 4z" fill="#e00"/>',
      globe: '<circle cx="6" cy="9" r="5.500" fill="#1a22c8" stroke="#000"/><path d="M3 5l4 2-2 3 3 3-4 1zM8 5l3 3-2 1z" fill="#19b52a"/>' + redArrow,
      disc: '<path d="M.5 3.500h5v8h-5zM3.500 5.500h5v8h-5zM6.500 7.500h5v8h-5z" fill="#fff" stroke="#000"/><path d="M6 3h9v4" fill="none" stroke="#e00" stroke-width="1.500"/>',
      cut: `<path d="M5 1l4 9M11 1L7 10" stroke="${G}" stroke-width="1.500"/><circle cx="5" cy="12.500" r="2.200" fill="none" stroke="#2f62c0" stroke-width="1.500"/><circle cx="11" cy="12.500" r="2.200" fill="none" stroke="#2f62c0" stroke-width="1.500"/>`,
      copy: '<path d="M1.500 1.500h6l2 2v8h-8z" fill="#dfeaf8" stroke="#4d7ab8"/><path d="M6.500 4.500h6l3 3v8h-9z" fill="#eef4fc" stroke="#4d7ab8"/><path d="M8 9.500h5M8 11.500h5M8 13.500h5" stroke="#7da2d4"/>',
      paste: '<path d="M1.500 2.500h11v12h-11z" fill="#e0a940" stroke="#7a5a20"/><path d="M4 1h6v3H4z" fill="#888"/><path d="M7.500 6.500h6l2 2v7h-8z" fill="#eef4fc" stroke="#4d7ab8"/><path d="M9 10.500h5M9 12.500h5" stroke="#7da2d4"/>',
      undo: '<path d="M4 6q9-5 9 3q0 4-4 6" fill="none" stroke="#4c8adf" stroke-width="2.500"/><path d="M2 2v8h7z" fill="#4c8adf"/>',
      redo: '<path d="M12 6Q3 1 3 9q0 4 4 6" fill="none" stroke="#b9bdc8" stroke-width="2.500"/><path d="M14 2v8H7z" fill="#b9bdc8"/>',
      bold: txt('B', 16, '#000', serif),
      italic: txt('I', 16, '#000', serif + ' font-style="italic"'),
      under: `<text x="8" y="12" text-anchor="middle" font-size="14" ${serif}>U</text><path d="M3 14.500h10" stroke="#000" stroke-width="1.500"/>`,
      sup: `<text x="2" y="13" font-size="14" fill="${G}" ${serif}>x</text><text x="10" y="7" font-size="8" fill="${G}">2</text>`,
      sub: `<text x="2" y="11" font-size="14" fill="${G}" ${serif}>x</text><text x="10" y="15" font-size="8" fill="${G}">2</text>`,
      supsub: `<text x="2" y="12" font-size="14" fill="${G}" ${serif}>x</text><text x="10" y="7" font-size="7" fill="${G}">2</text><text x="10" y="15" font-size="7" fill="${G}">1</text>`,
      greek: txt('αβ', 12, G, serif),
      abig: `<text x="6" y="14" text-anchor="middle" font-size="17" fill="${G}" font-family="Liberation Serif">A</text><path d="M11 4h5l-2.500-3z" fill="${G}"/>`,
      asmall: `<text x="6" y="14" text-anchor="middle" font-size="13" fill="${G}" font-family="Liberation Serif">A</text><path d="M11 1h5l-2.500 3z" fill="${G}"/>`,
      align: '<path d="M2 2.500h12M4 5h8M2 7.500h12M4 10h8M2 12.500h12" stroke="#000"/>',
      barcode: '<path d="M2.500 2v12M5.500 2v12M8.500 2v9M11.500 2v12M13.500 2v9" stroke="#222"/>',
      fontc: '<text x="8" y="11" text-anchor="middle" font-size="14" fill="#1a1a9c" font-family="Liberation Serif" font-weight="bold">A</text><path d="M0 12h16v4H0z"/>',
      fill: '<path d="M2 6l5-5 6 6-5 4z" fill="#fff" stroke="#000"/><path d="M7 1v6M12 6q3 0 3 5" stroke="#1a1a9c" fill="none" stroke-width="2"/><path d="M0 12h16v4H0z" fill="#f3ef9c"/>',
      palette: `<path d="M1 6q0-5 7-5t7 5-5 4q-3 0-3 1T1 6z" fill="#a9aebc" stroke="${L}"/><path d="M4 5h2M8 3h2M11 6h2" stroke="#fff" stroke-width="1.500"/><path d="M0 12h16v4H0z" fill="#77776e"/>`,
      pen: '<path d="M13 0l2 2-7 8-4 1 1-4z" fill="#fff" stroke="#000"/><path d="M0 12h16v4H0z"/>',
      lamp: `<circle cx="8" cy="9" r="4" fill="${L}"/><path d="M6.500 0h3v5h-3z" fill="${L}"/><path d="M0 9h2M14 9h2M2 3l2 2M14 3l-2 2M2 15l2-2M14 15l-2-2M8 14v2" stroke="${G}"/>`,
      hatch: `<path d="M0 4l4-4M0 8l8-8M0 11L11 0M3 12L15 0M7 12l9-9M11 12l5-5" stroke="${G}" stroke-width="1.500"/><path d="M0 12h16v4H0z" fill="#66665c"/>`,
      border: '<path d="M1.500 1.500h13v10h-13zM8 1v10M1 6.500h14" fill="none" stroke="#888" stroke-dasharray="1 1"/><path d="M1 14.500h14" stroke="#000" stroke-width="1.500"/>',
      merge: '<path d="M.5.5h15v15H.5zM0 4.500h16M0 11.500h16M6 0v4M10 12v4" fill="#fff" stroke="#000"/><path d="M2 8h4M10 8h4" stroke="#000"/><text x="8" y="10" text-anchor="middle" font-size="8">a</text>',

      pointer: '<path d="M4 1l8 8H9l2 5-2 1-2-5-3 3z" fill="#fff" stroke="#000"/>',
      zoomin: `<circle cx="7" cy="6" r="4.500" fill="#eef" stroke="${G}"/><path d="M5 6h4M7 4v4" stroke="${G}"/><path d="M10 9l5 5" stroke="${L}" stroke-width="2.500"/>` + gline('M1.500 12v3h7v-2'),
      zoomout: `<circle cx="7" cy="6" r="4.500" fill="#eef" stroke="${G}"/><path d="M5 6h4" stroke="${G}"/><path d="M10 9l5 5" stroke="${L}" stroke-width="2.500"/>` + gline('M1.500 12v3h7v-2'),
      cross: '<path d="M8 2v12M2 8h12M5.500 5.500h5v5h-5z" fill="none" stroke="#000"/>',
      target: '<circle cx="8" cy="8" r="5.500" fill="none" stroke="#000"/><path d="M8 0v4M8 12v4M0 8h4M12 8h4M6.500 6.500h3v3h-3z" fill="none" stroke="#000"/>',
      pair: `<path d="M8 0v4M8 12v4" stroke="${L}" stroke-width="1.500"/><path d="M4.500 3h7L8 7zM4.500 13h7L8 9z" fill="${G}"/>`,
      region: `<ellipse cx="9" cy="11" rx="6.500" ry="3.500" fill="#a9aebc" stroke="${G}"/><path d="M2.500 0v4" stroke="${G}"/><path d="M0 3h5L2.500 6z" fill="${G}"/>`,
      fit: gline('M0 13l6-4 8-7M5 10h9M8 6.500h6M8.500 12v3h5v-3') + `<path d="M2.500 0v4" stroke="${G}"/><path d="M0 3h5L2.500 6z" fill="${G}"/>`,
      dots: `<path d="M4 6h2v2H4zM10 2h2v2h-2zM12 6h2v2h-2zM6 11h2v2H6zM11 11h2v2h-2z" fill="${G}"/>`,
      text: txt('T', 16, '#000', serif),
      block: gline('M.5 3.500h11v10H.5zM6 3v4M6 10v4M1 8.500h4M8 8.500h4') + `<text x="11" y="6" font-size="6" fill="${L}">A</text>`,
      arrow: '<path d="M2 14l9-9" stroke="#000" stroke-width="1.500"/><path d="M7 2h7v7z"/>',
      line: '<path d="M2 14L14 2" stroke="#000" stroke-width="1.500"/>',
      rect: '<path d="M2.500 3.500h11v9h-11z" fill="#9a9a9a" stroke="#000"/>',
      brack: `<path d="M.5 15.500v-5h15v5" fill="none" stroke="${G}"/><path d="M8 1v7M5 2.500l6 4M11 2.500l-6 4" stroke="${G}"/>`,
      hand: '<path d="M5 15l-4-5 1-1 2 1V4l1-1 1 1V2l1-1 1 1 1-1 1 1v1l1-1 1 1v8l-1 4z" fill="#fff" stroke="#000"/><path d="M6 4v4M8.500 3v5M11 4v4" stroke="#000"/>',
      sqrt: `<path d="M0 9h2l2 5L7 2.500h9" fill="none" stroke="${L}" stroke-width="1.500"/><path d="M8.500 6.500h5v7h-5v-4h5M14 14h2" fill="none" stroke="${L}" stroke-width="1.500"/>`,
      minig: '<path d="M1.500.5h10l3 3v12h-13z" fill="#fff" stroke="#000"/><path d="M3.500 3v10h9" fill="none" stroke="#000" stroke-dasharray="2 1"/><path d="M5 10l2-3 2 2 3-4" fill="none" stroke="#e00"/>',
      handg: `<path d="M5 12l-4-4 1-1 2 1V4l1-1 1 1V2l1-1 1 1 1-1 1 1v1l1-1 1 1v5l-1 4z" fill="#eef" stroke="${G}"/><path d="M6 4v3M8.500 3v4M12 4.500h4M0 13.500h16M14.500 0v16" stroke="${G}"/>`,
      cube: `<path d="M4 4l4-3h8v11l-4 3H4z" fill="#a9aebc" stroke="${G}"/><path d="M4 4h8v11M12 4l4-3" fill="none" stroke="${G}"/><circle cx="3" cy="9" r="2.500" fill="none" stroke="${L}"/>`,
      lines: `<path d="M0 2h16M0 6.500h16M0 11h16" stroke="${L}" stroke-width="2"/><path d="M0 15h16" stroke="${G}" stroke-width="2"/>`,
      rings: `<circle cx="8" cy="8" r="7.500" fill="none" stroke="${G}"/><circle cx="8" cy="10" r="4.500" fill="none" stroke="${G}"/><circle cx="8" cy="12" r="2" fill="none" stroke="${G}"/>`,
      box: gline('M5 .5h6M8 .5v5M2.500 5.500h12v5h-12zM2 8h13M8 11v4M5 15.500h6'),
      legend: gline('M.5 .5h15v15M.5 0v16M3 4.500h5') + `<text x="10" y="8" font-size="7" fill="${G}">B</text><text x="10" y="15" font-size="7" fill="${G}">C</text><path d="M3 11h5M5 9.500v3" stroke="${L}"/>`,
      ruler: gline('M3.500.5h8v15h-8zM9 3.500h3M9 6.500h3M9 9.500h3M9 12.500h3M5 4.500h3M6.500 3v3M5 8.500h3M5 12.500h3M6.500 11v3'),
      clock: '<circle cx="6.500" cy="6.500" r="6" fill="#fff" stroke="#000"/><path d="M6.500 3v4h3" fill="none" stroke="#000"/><path d="M10 6h3v4h2v3H8v-3h2z" fill="#e00" stroke="#600"/><path d="M8 14.500h8" stroke="#000"/>',
      yfold: '<path d="M.5 2.500h4l1-2h4v2h4v10H.5z" fill="#fff700" stroke="#000"/><path d="M10 6h3v4h2v3H8v-3h2z" fill="#e00" stroke="#600"/><path d="M8 14.500h8" stroke="#000"/>',
      tableg: gline('M1.500 3.500h13v10h-13zM1 6.500h14M1 10h14M5.500 3v11M10 3v11'),
      frame1: gline('M1.500 1v13h13V1', L),

      stairs: '<path d="M0 11h5v4H0zM0 7h9v3H0zM5 3h8v3H5zM9 0h7v2H9z" fill="#333"/><path d="M6 11h5v3H6zM10 7h6v3h-6z" fill="#8a8f9c"/>',
      ax1: gline('M2.500 1v12.500H15M2.500 13.500l9-9M.5 3l2-2 2 2M13 11.500l2 2-2 2M9 4h3v3', L),
      ax2: gline('M2.500 0v13.500H15M2.500 13.500l9-9') + gline('M13 11.500l2 2-2 2', L),
      ax3: gline('M2.500 1v13.500H15M2.500 14.500l9-9M.5 3l2-2 2 2'),
      xy: `<text x="0" y="12" font-size="11" font-weight="bold" fill="${G}">XY</text>` + gline('M3 3q5-4 10 0M13 0v3h-3M13 13q-5 4-10 0M3 16v-3h3'),
      runax: gline('M1.500 0v14.500H16M0 3h3M0 7h3M0 11h3M5 13v3M9 13v3') + `<g transform="translate(3 0) scale(.8)">${runner('#444')}</g>`,
      lay1: gline('M.5 .5h15v15H.5zM3 3.500h10v3H3zM4.500 9v4h3M10.500 9v4h3'),
      lay2: gline('M.5 .5h15v5H.5zM.5 8.500h6v7h-6zM9.500 8.500h6v7h-6zM4.500 2v2h2M11.500 2v2h2M3 11v2h2M12 11v2h2'),
      lay3: '<path d="M.5.5h6v6h-6zM9.500.5h6v6h-6zM.5 9.500h15v6H.5z" fill="#fff" stroke="#000"/><path d="M3 3v2h2M12 3v2h2M4 12v2h2M11 12v2h2" stroke="#000" fill="none"/>',
      lay4: gline('M.5 .5h15v5H.5zM0 4l4-3 4 3 4-3 4 3M.5 7.500h10v5H.5zM4.500 10.500h11v5h-11zM5 11l5 3 5-3'),
      fr1: gline('M2.500 1v13.500H16') + gline('M0 3.500h3M0 7h3M0 10.500h3'),
      fr2: gline('M2.500 14V2.500H14V14').replace('stroke=', 'stroke-dasharray="2 1" stroke='),
      fr3: gline('M2.500 2v12.500H14V2').replace('stroke=', 'stroke-dasharray="2 1" stroke='),
      fr4: gline('M2.500 2.500h11v12h-11z').replace('stroke=', 'stroke-dasharray="2 1" stroke='),
      fr5: gline('M8.500 4v5h5M10 6h3') + gline('M2.500 2v12.500H15', L),
      fr6: gline('M2.500 2v12.500H15', L) + gline('M8.500 3v5h5M10 6l3-3'),
      al1: gline('M.5 0v16', L) + paper(3.5, 1.5, 7, 5) + paper(3.5, 9.5, 12, 5),
      al2: gline('M14.500 0v16', L) + paper(5.5, 1.5, 7, 5) + paper(1.5, 9.5, 11, 5),
      al3: gline('M0 .5h16', L) + paper(1.5, 3.5, 5, 12) + paper(9.5, 3.5, 5, 7),
      al4: gline('M0 15.500h16', L) + paper(1.5, 1.5, 5, 11) + paper(9.5, 5.5, 5, 7),
      al5: paper(5.5, 2.5, 5, 4) + paper(3.5, 9.5, 9, 4) + gline('M8 0v16', L),
      al6: paper(1.5, 5.5, 5, 5) + paper(9.5, 3.5, 5, 9) + gline('M0 8h16', L),
      al7: gline('M.5 0v8M14.500 0v8M2.500 8v8M15.500 9v7', L) + paper(3.5, 1.5, 8, 5) + paper(5.5, 9.5, 8, 5),
      al8: gline('M0 .5h7M9 .5h7M0 15.500h7M9 15.500h7', L) + paper(1.5, 3.5, 5, 8) + paper(9.5, 4.5, 5, 8),
      al9: paper(0.5, 4.5, 3, 7) + paper(6.5, 2.5, 3, 11) + paper(12.5, 6.5, 3, 4) + gline('M4 8h2M10 8h2'),
      al10: paper(6.5, 0.5, 3, 3) + paper(2.5, 6.5, 11, 3) + paper(4.5, 12.5, 7, 3) + gline('M8 4v2M8 10v2'),
      rot: gline('M.5 1.500h5v5h-5zM10.500 9.500h5v5h-5z') + `<path d="M15 7V4h-3V1L8 4l4 3V6M1 9v3h3v3l4-3-4-3v2" fill="${G}"/>`,
      front: gline('M.5 .5h8v7h-8z') + `<path d="M4.500 4.500h8v8h-8z" fill="#fff" stroke="${G}"/><path d="M9 13h7v3H9z" fill="${G}"/>`,
    };

    const down = '<svg class="w-[5px] h-[3px]" viewBox="0 0 5 3"><path d="M0 0h5L2.500 3z"/></svg>';

    document.querySelectorAll('[data-tools]').forEach(bar => {
      const vertical = bar.dataset.dir === 'v';
      bar.innerHTML = bar.dataset.tools.split(' ').map(token => {
        if (token === 'grip') {
          return vertical
            ? '<span class="block h-[10px] pt-1 pl-1"><span class="block w-[18px] border-t-2 border-dotted border-[#a4a4b4]"></span></span>'
            : '<span class="w-[11px] flex justify-center"><span class="h-4 border-l-2 border-dotted border-[#a4a4b4]"></span></span>';
        }
        if (token === '|') {
          return vertical
            ? '<span class="flex items-center h-2 pl-1"><span class="w-[18px] border-t border-[#b4b4bc]"></span></span>'
            : '<span class="w-2 flex justify-center"><span class="h-4 border-l border-[#b8b8c4]"></span></span>';
        }
        if (token === 'cap') {
          return vertical
            ? '<button aria-label="Toolbar options" class="flex w-full h-[13px] items-center justify-end pr-1 bg-linear-to-r from-[#e6e7f4] to-[#b8b8d0]"><svg class="w-[6px] h-[7px]" viewBox="0 0 6 7"><path d="M.5 0v7" stroke="#000"/><path d="M2 0v7l4-3.500z"/></svg></button>'
            : '<button aria-label="Toolbar options" class="w-3 h-[26px] flex items-end justify-center pb-1 rounded-r-sm bg-linear-to-b from-[#c9c9de] to-[#a2a2be]"><svg class="w-[6px] h-[6px]" viewBox="0 0 6 6"><path d="M0 .5h6" stroke="#000"/><path d="M0 2.500h6L3 6z"/></svg></button>';
        }
        const name = token.replace(/[*>]/g, '');
        const state = token.includes('*') ? 'border border-[#0078d7] bg-[#cce4f7]' : '';
        const button = `<button aria-label="${name}" class="w-[22px] h-[22px] shrink-0 flex items-center justify-center ${state}"><svg class="w-4 h-4 font-['Liberation_Sans',Arial,sans-serif]" viewBox="0 0 16 16">${icons[name]}</svg></button>`;
        if (!token.includes('>')) return button;
        const width = token.endsWith('>>') ? 'w-[13px]' : vertical ? 'w-2' : 'w-[10px]';
        return `<span class="flex items-center">${button}<button aria-label="${name} options" class="${width} flex justify-center">${down}</button></span>`;
      }).join('');
    });

    document.querySelectorAll('[data-controls]').forEach(box => {
      box.innerHTML = [
        ['Minimize', '<path d="M0 4.500h10" stroke="#000"/>'],
        ['Maximize', '<path d="M1.500 2.500h7v6h-7z" fill="none" stroke="#000"/>'],
        ['Close', '<path d="M1 1l8 8M9 1L1 9" stroke="#000" stroke-width="1.500"/>'],
      ].map(([label, path]) => `<button aria-label="${label}" class="w-[35px] h-5 flex items-center justify-center"><svg class="w-[10px] h-[10px]" viewBox="0 0 10 10">${path}</svg></button>`).join('');
    });

    // Class, Sex, Age, Survived, count
    const records = `First Male Adult Yes 57
First Male Child Yes 5
First Female Adult Yes 140
First Female Child Yes 1
Second Male Adult Yes 14
Second Male Child Yes 11
Second Female Adult Yes 80
Second Female Child Yes 13
Third Male Adult Yes 75
Third Male Child Yes 13
Third Female Adult Yes 76
Third Female Child Yes 14
Crew Male Adult Yes 192
Crew Female Adult Yes 20
First Male Adult No 118
First Female Adult No 4
Second Male Adult No 154
Second Female Adult No 13
Third Male Adult No 387
Third Male Child No 35
Third Female Adult No 89
Third Female Child No 17
Crew Male Adult No 670
Crew Female Adult No 3`.split('\n').map(row => row.split(' '));

    // Worksheet
    const rowHead = 'bg-[#dfdee3] border-b border-r border-black text-right pr-[3px] font-normal h-4 p-0';
    const yellow = 'bg-[#fafac8] border-b border-r border-[#c0c0c0] text-center h-4 p-0';
    const white = 'bg-white border-b border-r border-[#c0c0c0] h-4 py-0 px-[3px]';
    const empty = 'bg-[#f3f3f3] border-b border-r border-[#c0c0c0] h-4 p-0';

    document.getElementById('bookHead').innerHTML = '<tr><th class="w-[86px] h-6 p-0 bg-[#dfdee3] border-b border-r border-black"></th>' +
      ['A(X)', 'B(Y)', 'C(Y)', 'D(Y)', 'E(Y)'].map(name => name === 'D(Y)'
        ? `<th class="w-[67px] h-6 p-0 font-normal bg-[#a0c6e4] text-[#2a4a6a] border-b border-r border-black">${name}</th>`
        : `<th class="w-[67px] h-6 p-0 font-normal bg-[#dfdee3] border-b border-r border-black">${name}</th>`).join('') + '</tr>';

    let rows = '';
    [['Long Name', 'Class', 'Sex', 'Age', 'Survived', ''], ['Units', '', '', '', '', ''], ['Comments', '', '', '', '', '']].forEach(r => {
      rows += `<tr><th class="${rowHead}">${r[0]}</th>` + r.slice(1).map(c => `<td class="${yellow}">${c}</td>`).join('') + '</tr>';
    });
    rows += '<tr><th class="bg-[#a0c6e4] text-[#2a4a6a] border-b border-r border-black text-right pr-[3px] font-normal h-4 p-0">F(x)=</th>' +
      [0, 1, 2, 3, 4].map(i => i === 3
        ? '<td class="relative bg-[#f6f4b0] h-4 p-0 outline-2 -outline-offset-1 outline-[#1e90e8]"><span class="absolute -right-[2px] -bottom-[2px] w-[5px] h-[5px] bg-[#1e90e8]"></span></td>'
        : '<td class="bg-[#f6f4b0] border-b border-r border-[#c0c0c0] h-4 p-0"></td>').join('') + '</tr>';
    rows += `<tr><th class="${rowHead}">Categories</th>` + ['Unsorted', 'Unsorted', 'Unsorted', 'Unsorted', ''].map(c => `<td class="${yellow}">${c}</td>`).join('') + '</tr>';
    for (let i = 0; i < 28; i++) {
      const rec = records[i];
      rows += `<tr><th class="${rowHead}">${i + 1}</th>`;
      rows += rec
        ? rec.map((c, k) => `<td class="${white} ${k === 4 ? 'text-right' : ''}">${c}</td>`).join('')
        : `<td class="${empty}"></td>`.repeat(5);
      rows += '</tr>';
    }
    document.getElementById('bookBody').innerHTML = rows;

    // Flow charts
    const orders = [['First', 'Second', 'Third', 'Crew'], ['Male', 'Female'], ['Adult', 'Child'], ['Yes', 'No']];
    const axisNames = ['Class', 'Sex', 'Age', 'Survived'];
    const colors = { First: '#f10000', Second: '#31659b', Third: '#ffc30f', Crew: '#37c674' };
    const sorted = [...records].sort((a, b) => {
      for (let k = 0; k < 4; k++) {
        const d = orders[k].indexOf(a[k]) - orders[k].indexOf(b[k]);
        if (d) return d;
      }
      return 0;
    });

    // Stacks every record inside its node on each axis, from y0 in direction dir
    function stack(y0, dir, scale, gapTotal) {
      return orders.map((names, k) => {
        let y = y0;
        const nodes = [];
        const spans = new Map();
        names.forEach(name => {
          const start = y;
          sorted.filter(r => r[k] === name).forEach(r => {
            const next = y + dir * r[4] * scale;
            spans.set(r, [y, next]);
            y = next;
          });
          nodes.push({ name, top: Math.min(start, y), bottom: Math.max(start, y) });
          y += dir * gapTotal / (names.length - 1);
        });
        return { nodes, spans };
      });
    }

    function ribbons(axes, xs, width) {
      let out = '';
      for (let k = 0; k < 3; k++) {
        const x1 = xs[k] + width;
        const x2 = xs[k + 1];
        const m1 = x1 + (x2 - x1) * 0.32;
        const m2 = x2 - (x2 - x1) * 0.32;
        sorted.forEach(r => {
          const [a, b] = axes[k].spans.get(r);
          const [c, d] = axes[k + 1].spans.get(r);
          out += `<path d="M${x1} ${a}C${m1} ${a} ${m2} ${c} ${x2} ${c}V${d}C${m2} ${d} ${m1} ${b} ${x1} ${b}z" fill="${colors[r[0]]}" fill-opacity=".7"/>`;
        });
      }
      return out;
    }

    const ax = [38.5, 165.5, 292.5, 419.5];
    const alluvial = stack(38, 1, 0.13, 6);
    document.getElementById('alluvial').innerHTML =
      '<text x="41" y="22" font-size="22">Alluvial</text>' + ribbons(alluvial, ax, 25) +
      alluvial.map((axis, k) => axis.nodes.map(n =>
        `<rect x="${ax[k]}" y="${Math.round(n.top) - .5}" width="25" height="${Math.round(n.bottom - n.top)}" fill="#fafafa" stroke="#000"/>` +
        `<text x="${ax[k] + 12.5}" y="${(n.top + n.bottom) / 2 + 2}" font-size="6" text-anchor="middle" fill="#222">${n.name}</text>`).join('') +
        `<text x="${ax[k] + 12.5}" y="346" font-size="9" text-anchor="middle">${axisNames[k]}</text>`).join('');

    const px = [64.5, 144.5, 225.5, 306.5];
    const parallel = stack(227, -1, 0.0706, 39.5);
    document.getElementById('parallel').innerHTML =
      '<text x="54" y="22" font-size="17">Parallel Set with Weight</text>' + ribbons(parallel, px, 0) +
      parallel.map((axis, k) => `<path d="M${px[k]} 32V227" stroke="#000"/>` + axis.nodes.map(n =>
        `<text x="${px[k] - 2}" y="${(n.top + n.bottom) / 2 + 2}" font-size="8" text-anchor="end" fill="#222">${n.name}</text>`).join('') +
        `<text x="${px[k] - 1}" y="254" font-size="8" text-anchor="middle" fill="#222">${axisNames[k]}</text>`).join('') +
      '<rect x="267.500" y="12.500" width="46" height="37" fill="none" stroke="#000"/>' +
      orders[0].map((name, i) => `<path d="M269 ${18.5 + i * 9}h17" stroke="${colors[name]}"/><text x="287" y="${20 + i * 9}" font-size="7" fill="#222">${name}</text>`).join('');
  </script>
</body>
</html>
